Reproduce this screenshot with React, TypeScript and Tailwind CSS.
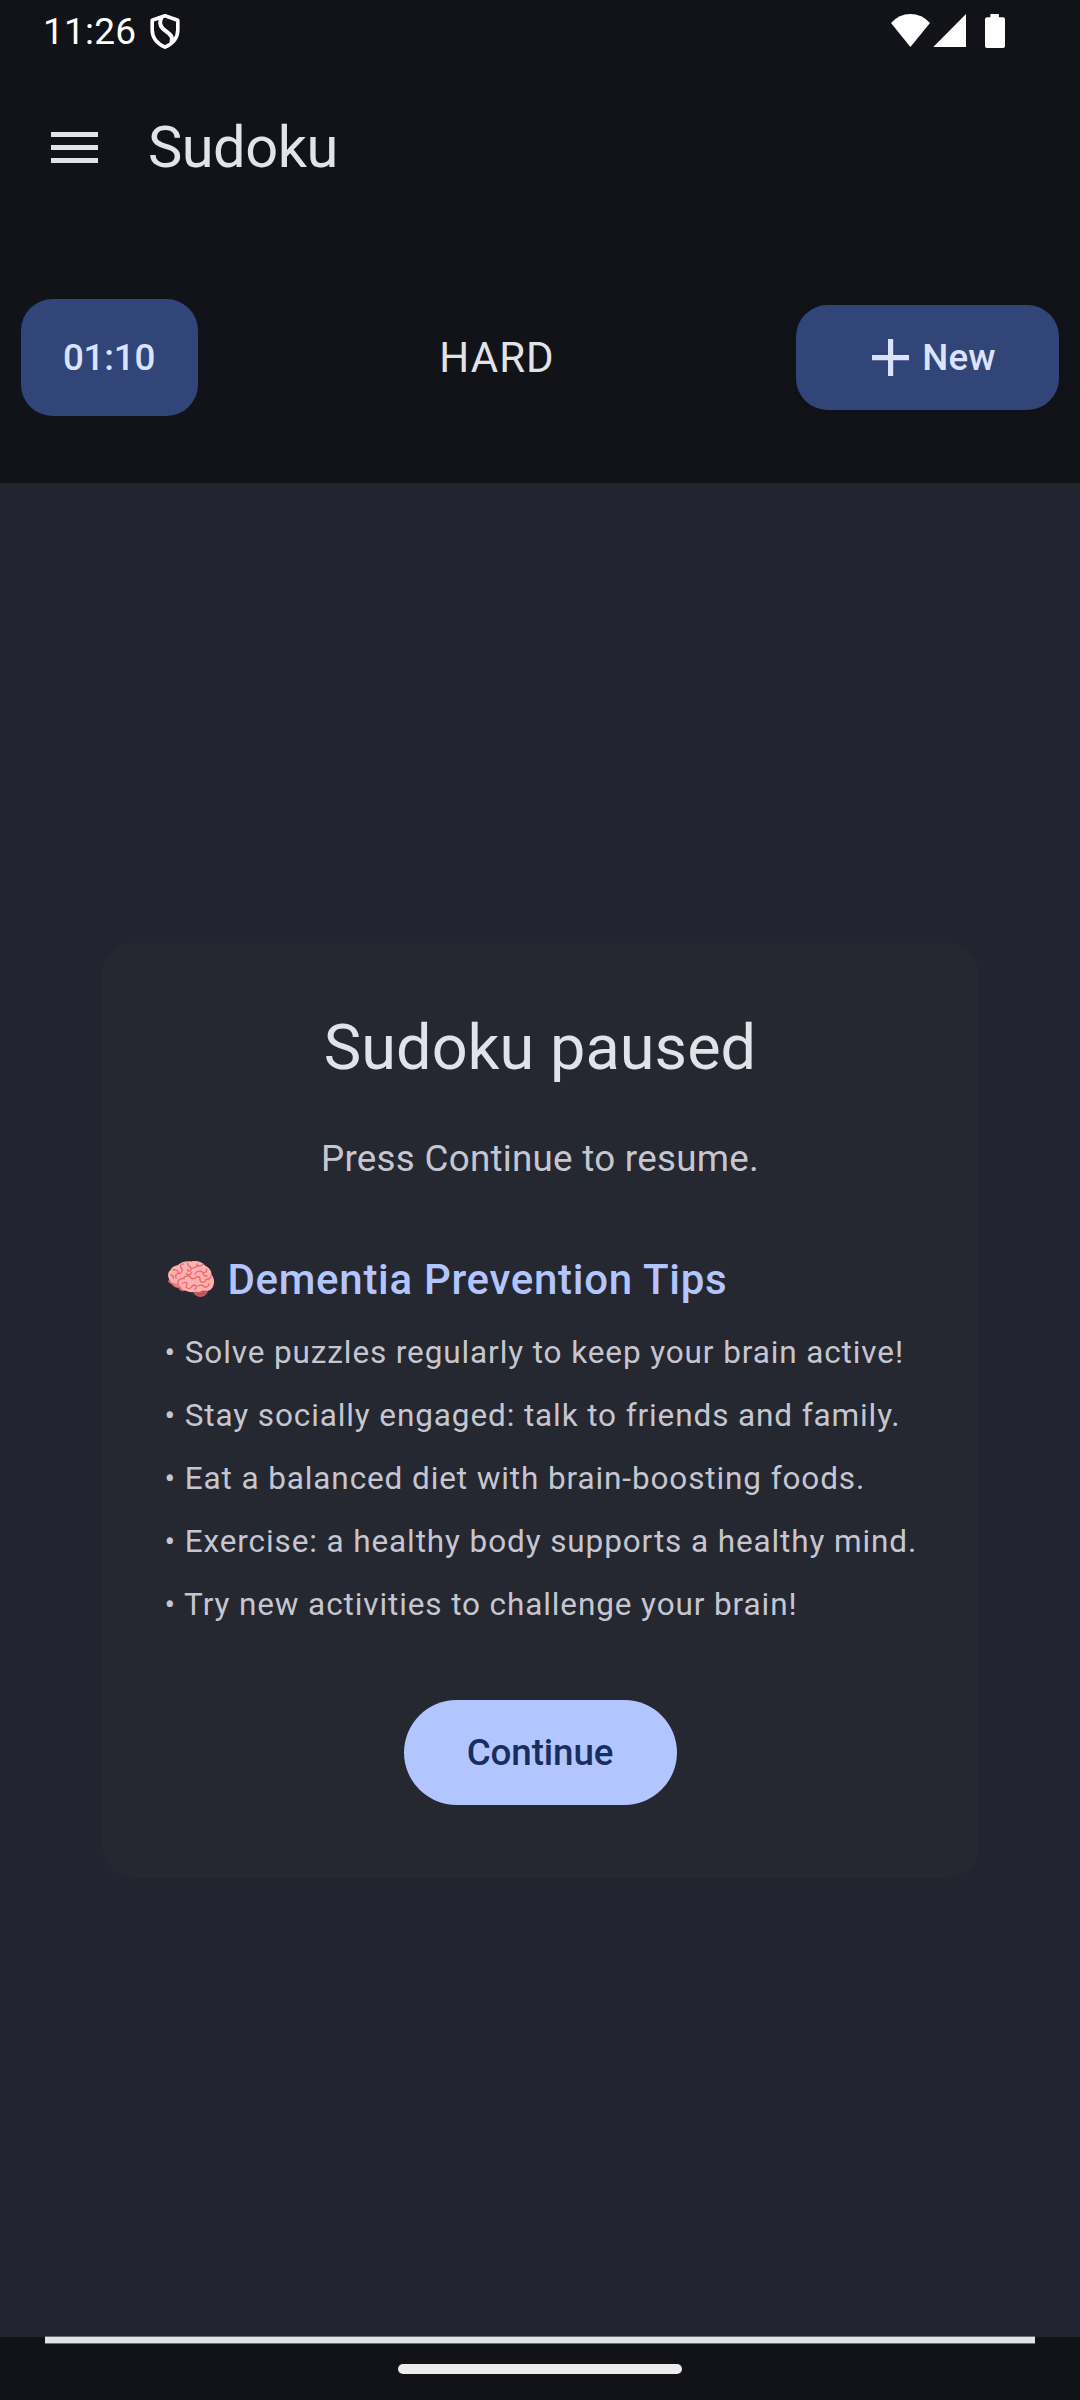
import React from "react";

const tips = [
  "Solve puzzles regularly to keep your brain active!",
  "Stay socially engaged: talk to friends and family.",
  "Eat a balanced diet with brain-boosting foods.",
  "Exercise: a healthy body supports a healthy mind.",
  "Try new activities to challenge your brain!",
];

function ShieldIcon() {
  return (
    <svg width="32" height="37" viewBox="0 0 32 37" fill="none" stroke="#fff" strokeWidth="3.6" strokeLinejoin="round">
      <path d="M16 2.800 3.200 7.200V17c0 7.800 5 13.600 12.800 17.200C23.800 30.600 28.800 24.800 28.800 17V7.200z" />
      <path d="M12.600 4.400c-2.400 4.200-1.800 7.800 1 11 2.600 2.800 6.600 4.600 8.400 7.400 1.400 2.400 1.200 4.600.4 6.600" strokeWidth="4" />
    </svg>
  );
}

function BrainIcon() {
  return (
    <svg width="48" height="38" viewBox="0 0 48 38" fill="none">
      <path d="M24 28c4-2 13-2 17 1 .5 4-3 8-8 8-4-.5-7-3.500-9-9z" fill="#cb5b5e" />
      <path d="m28 32 12-1M29.500 34.500l9-1" stroke="#a84448" strokeWidth=".7" />
      <path d="M4 22c1 4 4 6 9 6l-2-5z" fill="#e56b6e" />
      <path d="M11 5C15 1 20 1 24 1.400c6-1.400 11 .2 14 4 4 2 6.500 5 6.500 9 3 4 3.500 9 1 13-2 3.500-6 4-9.500 3-3 2-6 1.600-8 1.400-4 1-7 0-9-1-3 0-5-1.500-6-4-4-.2-8-2-10-5.500C-.2 15.500 1 12 3.500 10 4.500 7.500 7.500 5.500 11 5z" fill="#ffb0b0" />
      <path d="M1.600 21c3 3.500 7 3.800 9.600 3.600C10 20.500 13 18 17 18.600c0-3.500 6.500-3.500 7-.4M11.200 24.600c.2 3 2.300 5.600 5.600 5.900M6 10c3-1 5.500 1 5.500 3.600 3.500-.3 4.500-2.800 3-5.300-2-2-.5-4.500 2-4.500M11.500 13.600C9 13.600 8 16 9.200 18M4 15c1.500 0 2.500 1 2.200 3M20.500 3c0 3 3 3 3.500 5.500.6 3-3.500 3.500-3.500 1M24 8.500c3.500-.2 6-1 6.500-4.500M30 6c3 .2 4.500-.3 6-1.500M19 13.500c2 1.800 4.500 1.500 5.500-.8M28 14.200c1.500-3.500 6-4.200 8-1.500 2.500.3 4-1.400 3.500-3.500M36 12.700c0 2.300 1.500 3.500 4 3.300M24 18.400c2.500.8 4.500.2 5.500-1.600 2-1 4 .4 3.500 3 0 3.500 5.500 3.500 6-.3 3.500-.2 5-1.200 5-3.500M16 23c3-1.700 5 .2 3.500 2.600-1 1.600 0 3 2.500 3 2.800 0 2.400-4 5.500-3.600 3 .5 2 4 0 4.400M31 26c3-1.600 5.500-.8 6.500 1.200 2.500.2 4-.8 4.500-3" stroke="#e56b6e" strokeWidth="1.35" strokeLinecap="round" />
    </svg>
  );
}

function StatusBar() {
  return (
    <div className="flex h-[63px] shrink-0 items-center justify-between pl-[43px] pr-[75px] text-white">
      <div className="flex items-center">
        <span className="w-[106px] text-[37px] leading-[43px] tracking-[0.2px]">11:26</span>
        <ShieldIcon />
      </div>
      <svg width="114" height="35" viewBox="0 0 114 35" fill="#fff">
        <path d="M0 9Q8 0 19.400 0T39 9L19.400 33z" />
        <path d="M42.300 33 75 0V33z" />
        <path d="M99.400 0h8.500v3.300h4.100a2 2 0 0 1 2 2v26.600a2 2 0 0 1-2 2H96a2 2 0 0 1-2-2V5.300a2 2 0 0 1 2-2h3.400z" />
      </svg>
    </div>
  );
}

export default function App() {
  return (
    <div className="flex h-[2400px] w-[1080px] flex-col overflow-hidden bg-[#121318] font-['Roboto',sans-serif] text-[#e2e2e9]">
      <StatusBar />

      <header className="flex h-[168px] shrink-0 items-center pl-[51px]">
        <button aria-label="Menu" className="mr-[50px] flex w-[47px] flex-col gap-[8px]">
          <span className="h-[5px] bg-[#e2e2e9]" />
          <span className="h-[5px] bg-[#e2e2e9]" />
          <span className="h-[5px] bg-[#e2e2e9]" />
        </button>
        <h1 className="text-[57.75px] leading-[73px] tracking-[-0.5px]">Sudoku</h1>
      </header>

      <section className="flex h-[252px] shrink-0 items-center justify-between px-[21px]">
        <div className="flex h-[117px] w-[177px] items-center justify-center rounded-[31.5px] bg-[#314578] pt-[2px] pr-px text-[36.75px] font-medium tracking-[-0.2px] text-[#dbe1ff]">
          01:10
        </div>
        <span className="text-[42px] leading-[63px] tracking-[1.1px]">HARD</span>
        <button className="flex h-[105px] w-[263px] items-center justify-center rounded-[31.5px] bg-[#314578] pl-[13px] text-[36.75px] font-medium tracking-[0.1px] text-[#dbe1ff] shadow-[0_2px_8px_rgba(0,0,0,0.15)]">
          <svg className="mr-[13px]" width="37" height="37" viewBox="0 0 37 37" fill="#dbe1ff">
            <path d="M16 0h5.200v16H37v5.200H21.200V37H16V21.200H0V16h16z" />
          </svg>
          <span className="pt-[2px]">New</span>
        </button>
      </section>

      <main className="flex h-[1854px] shrink-0 items-center justify-center bg-[#22242f]">
        <div className="flex h-[935px] w-[877px] flex-col items-center rounded-[31.5px] bg-[#252731] px-[63px] pt-[63px]">
          <h2 className="text-[63px] leading-[84px] tracking-[0.05px]">Sudoku paused</h2>
          <p className="mt-[43px] text-[36.75px] leading-[52px] tracking-[0.28px] text-[#c5c6d0]">
            Press Continue to resume.
          </p>
          <div className="mt-[63px] flex flex-col self-stretch">
            <h3 className="flex h-[63px] items-center gap-[13px] text-[42px] leading-[63px] font-medium tracking-[0.7px] text-[#b3c5ff]">
              <span className="ml-[2px]">
                <BrainIcon />
              </span>
              Dementia Prevention Tips
            </h3>
            <ul className="mt-[21px] flex flex-col gap-[21px] text-[31.5px] leading-[42px] tracking-[0.89px] whitespace-nowrap text-[#c5c6d0]">
              {tips.map((tip) => (
                <li key={tip}>• {tip}</li>
              ))}
            </ul>
          </div>
          <button className="mt-[74px] h-[105px] w-[273px] rounded-full bg-[#b3c5ff] pt-[2px] text-[36.75px] font-medium tracking-[-0.1px] text-[#182e60]">
            Continue
          </button>
        </div>
      </main>

      <footer className="flex flex-1 flex-col items-center">
        <div className="-mt-px h-[8px] w-[990px] border-y border-[#6b6c75] bg-[#e2e2e9]" />
        <div className="mt-[20px] h-[10px] w-[284px] rounded-full bg-[#ececec]" />
      </footer>
    </div>
  );
}
